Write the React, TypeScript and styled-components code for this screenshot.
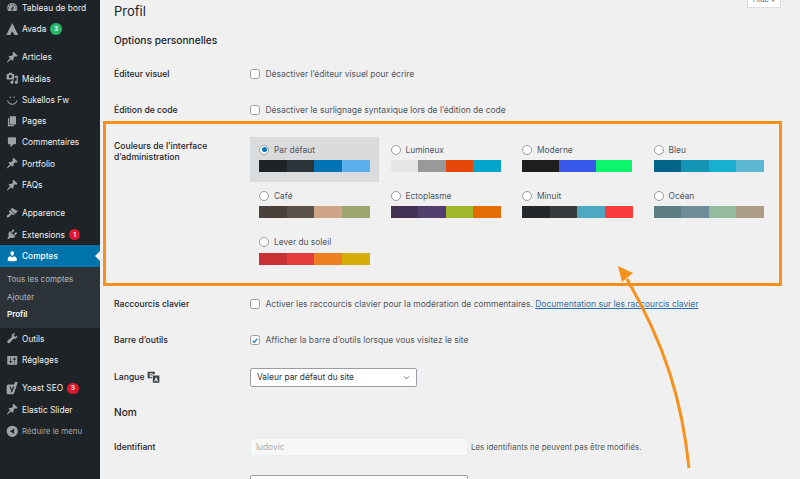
import React from "react";
import styled, { createGlobalStyle } from "styled-components";

const Global = createGlobalStyle`
  html, body { margin: 0; padding: 0; height: 100%; }
  body { background: #f0f0f1; font-family: Inter, "Liberation Sans", sans-serif; overflow: hidden; }
  * { box-sizing: border-box; }
`;

const Shell = styled.div`
  position: relative;
  display: flex;
  width: 800px;
  height: 479px;
  overflow: hidden;
  background: #f0f0f1;
`;

const Sidebar = styled.nav`
  flex: 0 0 100px;
  background: #1d2327;
  display: flex;
  flex-direction: column;
  margin-top: -3px;
  font-size: 8.35px;
`;

const MenuItem = styled.div<{ $active?: boolean; $gap?: boolean }>`
  position: relative;
  display: flex;
  align-items: center;
  height: 21.3px;
  flex: none;
  margin-top: ${(p) => (p.$gap ? "7px" : "0")};
  padding-left: 5.5px;
  gap: 4px;
  color: ${(p) => (p.$active ? "#fff" : "#eef0f1")};
  background: ${(p) => (p.$active ? "#0073aa" : "transparent")};
  font-weight: ${(p) => (p.$active ? 500 : 400)};
`;

const Notch = styled.span`
  position: absolute;
  right: 0;
  top: 50%;
  margin-top: -5px;
  border: 5px solid transparent;
  border-right-color: #f0f0f1;
  border-left-width: 0;
`;

const MenuIcon = styled.svg<{ $active?: boolean }>`
  flex: none;
  width: 12.5px;
  height: 12.5px;
  fill: ${(p) => (p.$active ? "#fff" : "#9ea3a8")};
`;

const Badge = styled.span<{ $green?: boolean }>`
  display: inline-flex;
  align-items: center;
  justify-content: center;
  width: 11.5px;
  height: 11.5px;
  border-radius: 50%;
  font-size: 6.6px;
  font-weight: 600;
  color: #fff;
  background: ${(p) => (p.$green ? "#27b56a" : "#e0182d")};
`;

const SubMenu = styled.div`
  display: flex;
  flex-direction: column;
  flex: none;
  padding: 4px 0 5px 7px;
  background: #2c3338;
`;

const SubItem = styled.div<{ $current?: boolean }>`
  height: 17.5px;
  display: flex;
  align-items: center;
  font-size: 8px;
  color: ${(p) => (p.$current ? "#fff" : "#b4b9be")};
  font-weight: ${(p) => (p.$current ? 600 : 400)};
`;

const Collapse = styled(MenuItem)`
  color: #a7aaad;
  font-size: 7.9px;
`;

const Main = styled.main`
  flex: 1;
  min-width: 0;
  padding: 0 19px 0 14px;
  color: #1d2327;
`;

const Header = styled.div`
  display: flex;
  justify-content: space-between;
  align-items: flex-start;
  height: 23px;
`;

const Title = styled.h1`
  margin: 1.5px 0 0;
  font-size: 13px;
  line-height: 19px;
  font-weight: 400;
  color: #1d2327;
`;

const HelpButton = styled.button`
  margin-top: -9px;
  width: 34px;
  height: 17px;
  padding: 0;
  background: #fff;
  border: 1px solid #dcdcde;
  color: #646970;
  font: 7.5px Inter, sans-serif;
`;

const SectionTitle = styled.h2<{ $h?: number }>`
  margin: 0;
  height: ${(p) => p.$h}px;
  display: flex;
  align-items: center;
  font-size: 10.2px;
  font-weight: 500;
  color: #1d2327;
`;

const Row = styled.div<{ $h?: number }>`
  display: grid;
  grid-template-columns: 136px 1fr;
  align-items: center;
  height: ${(p) => p.$h ?? 36}px;
`;

const TopRow = styled(Row)`
  align-items: start;
  padding-top: 9px;
`;

const Label = styled.div`
  padding-top: 1.5px;
  font-size: 8.6px;
  line-height: 11.5px;
  font-weight: 500;
  color: #1d2327;
  display: flex;
  align-items: center;
  gap: 3px;
`;

const WrappedLabel = styled(Label)`
  display: block;
  padding-top: 3.5px;
`;

const Field = styled.label`
  display: flex;
  align-items: center;
  gap: 5.5px;
  font-size: 8.47px;
  color: #50575e;
`;

const Check = styled.span<{ $on?: boolean }>`
  flex: none;
  display: flex;
  align-items: center;
  justify-content: center;
  width: 10px;
  height: 10px;
  background: #fff;
  border: 1px solid #9a9da1;
  border-radius: 2.5px;
  svg { width: 9px; height: 9px; }
`;

const DocLink = styled.a`
  color: #2f6fa8;
  text-decoration: underline;
`;

const Schemes = styled.div`
  display: grid;
  grid-template-columns: repeat(4, 129px);
  grid-auto-rows: 45px;
  column-gap: 2.5px;
  row-gap: 1.4px;
`;

const Scheme = styled.div<{ $selected?: boolean }>`
  padding: 7px 9px 0;
  background: ${(p) => (p.$selected ? "#dadbdd" : "transparent")};
`;

const SchemeName = styled.div`
  display: flex;
  align-items: center;
  gap: 5px;
  height: 11px;
  font-size: 8.4px;
  color: #50575e;
`;

const Radio = styled.span<{ $on?: boolean }>`
  flex: none;
  display: flex;
  align-items: center;
  justify-content: center;
  width: 10px;
  height: 10px;
  border-radius: 50%;
  background: #fff;
  border: 1px solid #9a9da1;
  &::after {
    content: "";
    display: ${(p) => (p.$on ? "block" : "none")};
    width: 5px;
    height: 5px;
    border-radius: 50%;
    background: #0073c0;
  }
`;

const Swatches = styled.div`
  display: grid;
  grid-auto-flow: column;
  grid-auto-columns: 1fr;
  width: 110.5px;
  height: 12px;
  margin-top: 5px;
`;

const Swatch = styled.span<{ $c: string }>`
  background: ${(p) => p.$c};
`;

const SelectBox = styled.div`
  display: flex;
  align-items: center;
  justify-content: space-between;
  width: 167px;
  height: 19px;
  padding: 0 6px;
  background: #fff;
  border: 1px solid #9a9da1;
  border-radius: 2px;
  font-size: 8.4px;
  color: #2c3338;
  svg { width: 7px; height: 7px; }
`;

const TextInput = styled.div<{ $disabled?: boolean }>`
  flex: none;
  width: 218px;
  height: 18px;
  display: flex;
  align-items: center;
  padding: 0 5px;
  font-size: 8.4px;
  border-radius: 2px;
  background: ${(p) => (p.$disabled ? "#f6f7f7" : "#fff")};
  border: 1px solid ${(p) => (p.$disabled ? "#ecedee" : "#9a9da1")};
  color: #a7aaad;
`;

const Hint = styled.span`
  font-size: 7.95px;
  color: #50575e;
`;

const InputLine = styled.div`
  display: flex;
  align-items: center;
  gap: 3px;
`;

const Highlight = styled.div`
  position: absolute;
  left: 103px;
  top: 121px;
  width: 679px;
  height: 165px;
  border: 3px solid #f7911c;
  pointer-events: none;
`;

const ArrowOverlay = styled.svg`
  position: absolute;
  inset: 0;
  width: 800px;
  height: 479px;
  pointer-events: none;
`;

const icons: Record<string, React.ReactNode> = {
  dash: <path d="M3.76 16h12.48c1.1-1.37 1.76-3.11 1.76-5 0-4.42-3.58-8-8-8s-8 3.58-8 8c0 1.89.66 3.63 1.76 5zM10 4c.55 0 1 .45 1 1s-.45 1-1 1-1-.45-1-1 .45-1 1-1zM6 6c.55 0 1 .45 1 1s-.45 1-1 1-1-.45-1-1 .45-1 1-1zm8 0c.55 0 1 .45 1 1s-.45 1-1 1-1-.45-1-1 .45-1 1-1zm-5.37 5.55L12 7v6c0 1.1-.9 2-2 2s-2-.9-2-2c0-.57.24-1.08.63-1.45zM4 10c.55 0 1 .45 1 1s-.45 1-1 1-1-.45-1-1 .45-1 1-1zm12 0c.55 0 1 .45 1 1s-.45 1-1 1-1-.45-1-1 .45-1 1-1zm-5 3c0-.55-.45-1-1-1s-1 .45-1 1 .45 1 1 1 1-.45 1-1z" />,
  avada: <path d="M10 0 20 20h-6l-4-7-3.500 7H0z" />,
  pin: <path d="M10.44 3.02l1.82-1.82 6.36 6.35-1.83 1.82c-1.05-.68-2.48-.57-3.41.36l-.75.75c-.92.93-1.04 2.35-.35 3.41l-1.83 1.82-2.41-2.41-2.8 2.79c-.42.42-3.38 2.71-3.8 2.29s1.86-3.39 2.28-3.81l2.79-2.79L4.1 9.36l1.83-1.82c1.05.69 2.48.57 3.4-.36l.75-.75c.93-.92 1.05-2.35.36-3.41z" />,
  media: <path d="M13 11V4c0-.55-.45-1-1-1h-1.67L9 1H5L3.67 3H2c-.55 0-1 .45-1 1v7c0 .55.45 1 1 1h10c.55 0 1-.45 1-1zM7 4.5c1.38 0 2.5 1.12 2.5 2.5S8.38 9.5 7 9.5 4.5 8.38 4.5 7 5.62 4.5 7 4.5zM14 6h5v10.5c0 1.38-1.12 2.5-2.5 2.5S14 17.88 14 16.5s1.12-2.5 2.5-2.5c.17 0 .34.02.5.05V9h-3V6zm-4 8.05V13h2v3.5c0 1.38-1.12 2.5-2.5 2.5S7 17.88 7 16.5 8.12 14 9.5 14c.17 0 .34.02.5.05z" />,
  smile: (
    <>
      <circle cx="7" cy="5" r="1.2" />
      <circle cx="13" cy="5" r="1.2" />
      <path d="M1.5 10h1.6c.8 3.4 3.6 5.6 6.9 5.6s6.1-2.2 6.9-5.6h1.6c-.8 4.4-4.3 7.2-8.5 7.2S2.300 14.400 1.500 10z" />
    </>
  ),
  page: <path d="M6 15V2h10v13H6zm-1 1h8v2H3V5h2v11z" />,
  comment: <path d="M5 2h9c1.1 0 2 .9 2 2v7c0 1.100-.9 2-2 2h-2l-5 5v-5H5c-1.100 0-2-.9-2-2V4c0-1.100.9-2 2-2z" />,
  brush: <path d="M14.48 11.060L7.410 3.990l1.500-1.500c.5-.56 2.300-.47 3.510.32 1.210.8 1.430 1.280 2.910 2.100 1.180.64 2.450 1.260 4.450.85zm-.71.71L6.700 4.700 4.930 6.470c-.39.39-.39 1.020 0 1.410l1.060 1.060c.39.39.39 1.030 0 1.420-.6.6-1.430 1.110-2.210 1.690-.35.26-.7.53-1.010.84C1.430 13.230.78 15.600 1.500 16.400c.71.72 3.080.07 4.420-1.280.31-.31.58-.66.84-1.010.58-.78 1.090-1.610 1.690-2.210.39-.39 1.020-.39 1.410 0l1.060 1.060c.39.39 1.020.39 1.410 0z" />,
  plugin: <path d="M13.110 4.360L9.870 7.600 8 5.730l3.240-3.240c.35-.34 1.050-.2 1.560.32.52.51.66 1.210.31 1.550zm-8 1.770l.91-1.120 9.010 9.010-1.190.84c-.71.71-2.630 1.160-3.820 1.160H6.140L4.900 17.260c-.59.59-1.540.59-2.120 0-.59-.58-.59-1.530 0-2.120l1.240-1.240v-3.880c0-1.130.4-3.190 1.090-3.890zm7.260 3.970l3.240-3.240c.34-.35 1.040-.21 1.550.31.52.51.66 1.210.31 1.550l-3.240 3.250z" />,
  user: <path d="M10 9.250c-2.270 0-2.730-3.440-2.730-3.440C7 4.020 7.820 2 9.970 2c2.160 0 2.980 2.020 2.710 3.810 0 0-.41 3.440-2.680 3.440zm0 2.570L12.720 10c2.390 0 4.520 2.330 4.520 4.530v2.490s-3.650 1.130-7.240 1.130c-3.650 0-7.240-1.130-7.240-1.130v-2.490c0-2.250 1.940-4.480 4.470-4.480z" />,
  tools: <path d="M16.680 9.770c-1.340 1.340-3.300 1.670-4.950.99l-5.410 6.520c-.99.99-2.590.99-3.580 0s-.99-2.590 0-3.570l6.520-5.420c-.68-1.650-.35-3.610.99-4.950 1.280-1.280 3.120-1.620 4.720-1.060l-2.890 2.890 2.820 2.820 2.860-2.870c.53 1.580.18 3.390-1.080 4.650z" />,
  settings: <path d="M18 16V4c0-.55-.45-1-1-1H3c-.55 0-1 .45-1 1v12c0 .55.45 1 1 1h14c.55 0 1-.45 1-1zM8 11h1c.55 0 1 .45 1 1s-.45 1-1 1H8v1.500c0 .28-.22.5-.5.5s-.5-.22-.5-.5V13H6c-.55 0-1-.45-1-1s.45-1 1-1h1V5.500c0-.28.22-.5.5-.5s.5.22.5.5V11zm5-2h-1c-.55 0-1-.45-1-1s.45-1 1-1h1V5.500c0-.28.22-.5.5-.5s.5.22.5.5V7h1c.55 0 1 .45 1 1s-.45 1-1 1h-1v5.500c0 .28-.22.5-.5.5s-.5-.22-.5-.5V9z" />,
  yoast: <path fillRule="evenodd" d="M3.500 4H13l1.500-4h4.500l-5.500 16c-.4 1.200-1 2.500-2 3.500H3.500A2.500 2.500 0 0 1 1 17V6.500A2.500 2.500 0 0 1 3.500 4zm2 3 3 7-1 2.500h2L13.500 7h-2L9.500 11.500 7.500 7z" />,
  back: <path fillRule="evenodd" d="M10 1a9 9 0 1 1 0 18 9 9 0 0 1 0-18zm3 4.500L6.500 10l6.500 4.500z" />,
};

type Item = { name: string; icon: string; gap?: boolean; badge?: string; green?: boolean };

const topItems: Item[] = [
  { name: "Tableau de bord", icon: "dash" },
  { name: "Avada", icon: "avada", badge: "3", green: true },
  { name: "Articles", icon: "pin", gap: true },
  { name: "Médias", icon: "media" },
  { name: "Sukellos Fw", icon: "smile" },
  { name: "Pages", icon: "page" },
  { name: "Commentaires", icon: "comment" },
  { name: "Portfolio", icon: "pin" },
  { name: "FAQs", icon: "pin" },
  { name: "Apparence", icon: "brush", gap: true },
  { name: "Extensions", icon: "plugin", badge: "1" },
];

const bottomItems: Item[] = [
  { name: "Outils", icon: "tools" },
  { name: "Réglages", icon: "settings" },
  { name: "Yoast SEO", icon: "yoast", badge: "3", gap: true },
  { name: "Elastic Slider", icon: "pin" },
];

const schemes = [
  { name: "Par défaut", colors: ["#1d2327", "#2c3338", "#0073b5", "#5ab0ec"], selected: true },
  { name: "Lumineux", colors: ["#e5e5e5", "#999999", "#e6480a", "#04a4cc"] },
  { name: "Moderne", colors: ["#1e1e1e", "#3858e9", "#0cf56c"] },
  { name: "Bleu", colors: ["#03648a", "#1595b5", "#19afd3", "#5cb7d2"] },
  { name: "Café", colors: ["#4a403c", "#5b524c", "#cfa587", "#9ea571"] },
  { name: "Ectoplasme", colors: ["#413256", "#523f6d", "#a3b72d", "#e56b05"] },
  { name: "Minuit", colors: ["#25282b", "#363b3f", "#4fa8c2", "#f93c3c"] },
  { name: "Océan", colors: ["#5d7d85", "#6e8d96", "#94bb9f", "#ab9d85"] },
  { name: "Lever du soleil", colors: ["#c83036", "#e33d3d", "#ee7e22", "#d4ad06"] },
];

const MenuRow = ({ item }: { item: Item }) => (
  <MenuItem $gap={item.gap}>
    <MenuIcon viewBox="0 0 20 20">{icons[item.icon]}</MenuIcon>
    <span>{item.name}</span>
    {item.badge && <Badge $green={item.green}>{item.badge}</Badge>}
  </MenuItem>
);

const Tick = () => (
  <svg viewBox="0 0 20 20" fill="none" stroke="#2271b1" strokeWidth="3">
    <path d="M4 10.500l4 4 8-9" />
  </svg>
);

export default function App() {
  return (
    <>
      <Global />
      <Shell>
        <Sidebar>
          {topItems.map((i) => (
            <MenuRow key={i.name} item={i} />
          ))}
          <MenuItem $active>
            <MenuIcon $active viewBox="0 0 20 20">{icons.user}</MenuIcon>
            <span>Comptes</span>
            <Notch />
          </MenuItem>
          <SubMenu>
            <SubItem>Tous les comptes</SubItem>
            <SubItem>Ajouter</SubItem>
            <SubItem $current>Profil</SubItem>
          </SubMenu>
          {bottomItems.map((i) => (
            <MenuRow key={i.name} item={i} />
          ))}
          <Collapse>
            <MenuIcon viewBox="0 0 20 20">{icons.back}</MenuIcon>
            <span>Réduire le menu</span>
          </Collapse>
        </Sidebar>
        <Main>
          <Header>
            <Title>Profil</Title>
            <HelpButton>Aide ▾</HelpButton>
          </Header>
          <SectionTitle $h={33}>Options personnelles</SectionTitle>
          <Row>
            <Label>Éditeur visuel</Label>
            <Field><Check />Désactiver l’éditeur visuel pour écrire</Field>
          </Row>
          <Row>
            <Label>Édition de code</Label>
            <Field><Check />Désactiver le surlignage syntaxique lors de l’édition de code</Field>
          </Row>
          <TopRow $h={158}>
            <WrappedLabel>Couleurs de l’interface<br />d’administration</WrappedLabel>
            <Schemes>
              {schemes.map((s) => (
                <Scheme key={s.name} $selected={s.selected}>
                  <SchemeName><Radio $on={s.selected} />{s.name}</SchemeName>
                  <Swatches>
                    {s.colors.map((c) => <Swatch key={c} $c={c} />)}
                  </Swatches>
                </Scheme>
              ))}
            </Schemes>
          </TopRow>
          <Row>
            <Label>Raccourcis clavier</Label>
            <Field>
              <Check />
              <span>Activer les raccourcis clavier pour la modération de commentaires. <DocLink>Documentation sur les raccourcis clavier</DocLink></span>
            </Field>
          </Row>
          <Row>
            <Label>Barre d’outils</Label>
            <Field><Check><Tick /></Check>Afficher la barre d’outils lorsque vous visitez le site</Field>
          </Row>
          <Row $h={38}>
            <Label>
              Langue
              <svg viewBox="0 0 20 20" width="13" height="13" fill="#3a3f44">
                <path fillRule="evenodd" d="M1 1h11v4H8v6H1zM4 3.500h4.500v1.500H5.500v3H7V7H6V6h3v1H8v2.500H4z" />
                <path fillRule="evenodd" d="M9 7h10v11H9zm5 2-3 7h1.700l.5-1.300h1.800l.5 1.300h1.700z" />
              </svg>
            </Label>
            <SelectBox>
              Valeur par défaut du site
              <svg viewBox="0 0 10 10" fill="none" stroke="#50575e" strokeWidth="1.200"><path d="M1.500 3.500 5 7l3.500-3.500" /></svg>
            </SelectBox>
          </Row>
          <SectionTitle $h={32}>Nom</SectionTitle>
          <Row $h={37}>
            <Label>Identifiant</Label>
            <InputLine>
              <TextInput $disabled>ludovic</TextInput>
              <Hint>Les identifiants ne peuvent pas être modifiés.</Hint>
            </InputLine>
          </Row>
          <Row $h={38}>
            <span />
            <TextInput />
          </Row>
        </Main>
        <Highlight />
        <ArrowOverlay viewBox="0 0 800 479">
          <path d="M689 468C682 400 665 345 627 279" fill="none" stroke="#f7911c" strokeWidth="3" />
          <path d="M618 266l15 7-11 9z" fill="#f7911c" />
        </ArrowOverlay>
      </Shell>
    </>
  );
}
